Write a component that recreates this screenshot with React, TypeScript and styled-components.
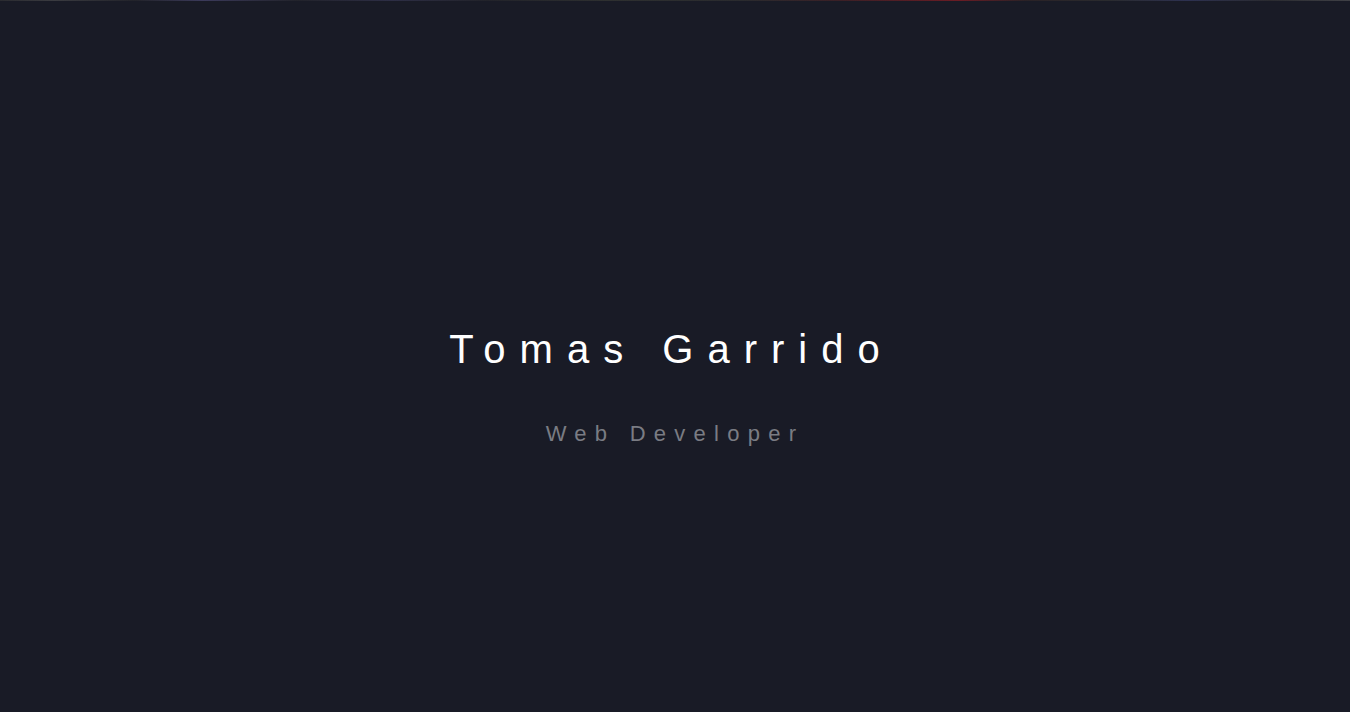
import React from "react";
import styled, { createGlobalStyle } from "styled-components";

const Global = createGlobalStyle`
  html, body { margin: 0; padding: 0; background: #191b26; }
  body { font-family: "Liberation Sans", Arial, sans-serif; }
`;

const Page = styled.main`
  min-height: 712px;
  background: #191b26;
  display: flex;
  flex-direction: column;
  align-items: center;
  box-sizing: border-box;
`;

const TopStrip = styled.div`
  align-self: stretch;
  height: 1px;
  background: linear-gradient(
    90deg,
    #2a2b30 0%,
    #3a3b40 4%,
    #22232a 10%,
    #3b3a5a 15%,
    #22232b 22%,
    #2d2e45 29%,
    #22232a 36%,
    #2e3030 45%,
    #2a2b2e 55%,
    #3a2026 62%,
    #6a1c24 71%,
    #2a2226 76%,
    #2a2b2e 82%,
    #2d3150 88%,
    #2a2b30 94%,
    #404146 100%
  );
`;

const Hero = styled.section`
  display: flex;
  flex-direction: column;
  align-items: center;
  padding-top: 326px;
  gap: 49px;
`;

const Name = styled.h1`
  margin: 0;
  font-family: "Liberation Sans", Arial, sans-serif;
  font-weight: 400;
  font-size: 40px;
  letter-spacing: 14px;
  padding-right: 7px;
  color: #ffffff;
`;

const Role = styled.p`
  margin: 0;
  font-family: "Liberation Sans", Arial, sans-serif;
  font-size: 22px;
  letter-spacing: 8.25px;
  color: #7a7c83;
`;

export default function App() {
  return (
    <>
      <Global />
      <Page>
        <TopStrip />
        <Hero>
          <Name>Tomas Garrido</Name>
          <Role>Web Developer</Role>
        </Hero>
      </Page>
    </>
  );
}
